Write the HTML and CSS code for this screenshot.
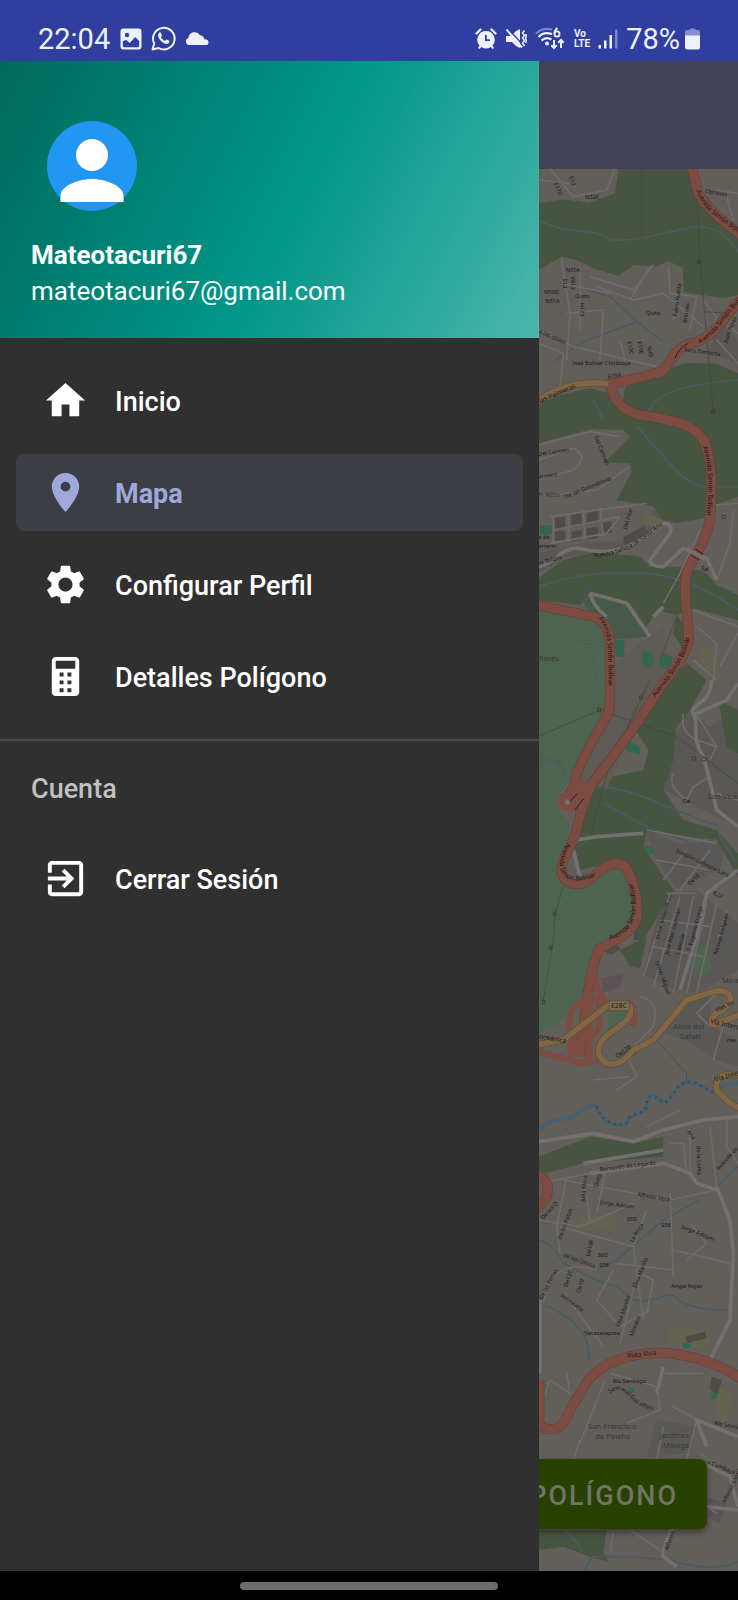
FILE: index.html
```html
<!DOCTYPE html>
<html lang="es">
<head>
<meta charset="utf-8">
<meta name="viewport" content="width=device-width, initial-scale=1">
<title>Mapa</title>
<link rel="stylesheet" href="styles.css">
</head>
<body>
<header class="status">
  <div class="status-group status-left">
    <span class="status-text">22:04</span>
    <svg class="ico-photo" viewBox="0 0 22 22" aria-hidden="true"><path fill-rule="evenodd" d="M3.500.5h15a3 3 0 0 1 3 3v15a3 3 0 0 1-3 3h-15a3 3 0 0 1-3-3v-15a3 3 0 0 1 3-3zM2.800 13v4.500c0 1 .6 1.700 1.700 1.700h13c1 0 1.700-.7 1.700-1.700V13l-4-4-5.500 6-3.200-3zM7 4.800a2.200 2.200 0 1 0 0 4.400 2.200 2.200 0 0 0 0-4.400z"/></svg>
    <svg class="ico-chat" viewBox="0 0 25 25" aria-hidden="true"><path d="M1.500 23.500l1.700-6A10.800 10.800 0 1 1 7.500 22z" fill="none" stroke="currentColor" stroke-width="2" stroke-linejoin="round"/><path d="M8.200 6.700c.4-.5 1.200-.5 1.500 0l1.300 2.600c.2.500-.8 1.500-1 1.900.8 1.600 2.300 3 4 3.700.5-.2 1.300-1.600 1.800-1.400l2.500 1.300c.6.400-.2 2.200-1 2.700-2 1.200-5.200-.5-7-2.200-1.800-1.700-3.600-4.300-3.200-6.500.1-.8.600-1.600 1.100-2.100z"/></svg>
    <svg class="ico-cloud" viewBox="0 0 24 15" aria-hidden="true"><path d="M4 14a3.600 3.600 0 0 1-.5-7A6.200 6.200 0 0 1 15 4.200c2.500 0 4 1.800 4.300 4 2.500-.2 4.200 1 4.200 3.200 0 1.600-1 2.600-2.500 2.600z"/></svg>
  </div>
  <div class="status-group status-right">
    <svg class="ico-alarm" viewBox="0 0 22 22" aria-hidden="true"><path fill-rule="evenodd" d="M11 3a8.700 8.700 0 0 1 6.500 14.500l1.500 2.500-1.500 1-1.800-2a8.700 8.700 0 0 1-9.400 0l-1.800 2L3 20l1.500-2.500A8.700 8.700 0 0 1 11 3zm-1 4v6h5v-1.800h-3.200V7z"/><path d="M1.500 5.500L5.500 1.500M16.500 1.500l4 4" stroke="currentColor" stroke-width="2.400" stroke-linecap="round"/></svg>
    <svg class="ico-mute" viewBox="0 0 22 22" aria-hidden="true"><path d="M1 8h5l5-5 4-2v19l-4-2-4-4H1z"/><path d="M1.500 1.500L17 19.500" stroke="currentColor" stroke-width="2"/><path d="M3.500 1L17 16" stroke="#303f9f" stroke-width="1.200"/><path d="M19.500 2.500l-2 2.500 2 2.500-2 2.500 2 2.500-2 2.500 2 3M20.500 6l1 2-1 2.500 1 2.500-1 2" fill="none" stroke="currentColor" stroke-width="1.500"/></svg>
    <svg class="ico-wifi" viewBox="0 0 31 24" aria-hidden="true"><path d="M1 6.500A17 17 0 0 1 17 2.500" fill="none" stroke="currentColor" stroke-width="2.200" opacity=".4"/><path d="M3.500 10A12.500 12.500 0 0 1 17 7.300M6.500 13.500a8.500 8.500 0 0 1 10-1" fill="none" stroke="currentColor" stroke-width="2.200"/><circle cx="12" cy="16.500" r="2"/><path d="M22.500 1q-3 2-3 5.500" fill="none" stroke="currentColor" stroke-width="2"/><circle cx="22" cy="7" r="2.600" fill="none" stroke="currentColor" stroke-width="1.800"/><path d="M19 13v8m-2.700-2.700L19 21l2.700-2.700M26 21v-8m-2.700 2.700L26 13l2.700 2.700" fill="none" stroke="currentColor" stroke-width="2"/></svg>
    <span class="volte"><span>Vo</span><span>LTE</span></span>
    <svg class="ico-signal" viewBox="0 0 20 20" aria-hidden="true"><path d="M.5 16h2.500v3.500H.5zM6 11.500h2.500v8H6zM11.500 6H14v13.500h-2.500z"/><path d="M17 .5h2.500v19H17z" opacity=".4"/></svg>
    <span class="status-text">78%</span>
    <svg class="ico-battery" viewBox="0 0 15 22" aria-hidden="true"><path d="M4.500 2q0-1.500 1.500-1.500h3q1.500 0 1.500 1.500H13q2 0 2 2v4H0V4q0-2 2-2z" opacity=".45"/><path d="M0 7.500h15V19q0 2.500-2.500 2.500h-10Q0 21.500 0 19z"/></svg>
  </div>
</header>

<main class="stage">
  <div class="screen">
    <div class="toolbar"></div>
    <div class="map-area">
      <svg class="map" viewBox="-1590 27 2214 4206" preserveAspectRatio="xMaxYMin slice" role="img" aria-label="Mapa">
        <defs>
          <path id="l1" d="M498 92C520 150 560 175 640 226"/>
          <path id="l2" d="M508 550C560 530 580 470 640 418"/>
          <path id="l3" d="M518 860C545 940 532 1020 530 1090"/>
          <path id="l4" d="M205 1375C240 1410 235 1480 235 1600"/>
          <path id="l5" d="M376 1612C420 1550 480 1490 480 1410"/>
          <path id="l6" d="M112 2048C60 2130 100 2190 200 2148"/>
          <path id="l7" d="M238 2340C310 2320 335 2260 305 2160"/>
          <path id="l8" d="M190 1190C290 1190 350 1130 420 1080"/>
          <path id="l9" d="M240 3700C290 3660 290 3740 370 3750"/>
          <path id="trunk-line" d="M485 20L505 100Q540 160 640 230M640 415C590 450 570 520 500 545C430 560 430 600 395 635C340 650 280 665 240 672C250 720 280 755 330 765C420 780 500 790 525 850C550 920 545 1000 540 1080C520 1180 470 1200 465 1270C465 1350 480 1400 475 1450C460 1500 420 1540 400 1570L300 1720 180 1880C140 1950 160 1990 110 2080C70 2160 120 2180 160 2170C210 2140 240 2090 285 2120C320 2170 330 2260 315 2290C290 2330 250 2340 210 2365C190 2400 175 2480 165 2560L150 2690M20 1335L190 1370Q238 1390 240 1450V1640C230 1690 150 1780 130 1880L105 1930M20 3790Q90 3840 120 3750L175 3660Q240 3580 400 3578Q540 3590 640 3660M28 3660V3800M20 3045C65 3060 65 3110 20 3145"/>
          <path id="secondary-line" d="M20 725Q120 655 235 672M20 2655L100 2640 235 2535 300 2540C320 2600 200 2610 205 2680C230 2730 270 2720 310 2670L370 2640 470 2520 560 2492C620 2490 610 2540 560 2560Q535 2580 550 2595L640 2560M640 2745Q550 2730 560 2790L600 2830 640 2850"/>
        </defs>
        <rect class="land" x="-1590" y="27" width="2214" height="4206"/>

        <!-- Built-up areas -->
        <g class="urban">
          <path d="M25 1180L150 1150 300 1140 370 1045 400 1080 300 1170 110 1190 25 1240z"/>
          <path d="M470 1650L540 1700 624 1640V2000L400 1890 430 1750z"/>
          <path d="M345 2005L440 2050 590 2045 570 2130 440 2185 380 2100z"/>
          <path d="M400 2200L500 2190 624 2290V2430L500 2500 430 2490 340 2440z"/>
          <path d="M450 2530L540 2510 540 2600 624 2640V2720L560 2700 470 2640 400 2620z"/>
          <path d="M380 3780L500 3800 480 3880 350 3890z"/>
          <path d="M560 480L624 540V610L540 580z"/>
        </g>
        <!-- Woodland -->
        <g class="wood">
          <path d="M265 27H485L505 100 560 165 624 215V405L580 415 460 395V325L415 303 380 320 310 315 265 348 190 325 140 300 95 290 25 330V130L100 118 175 128 255 100z"/>
          <path d="M25 735L90 705 180 685 235 700 300 780 330 810 180 808 25 850z"/>
          <path d="M285 680L340 660 420 625 470 608 560 612 624 640V1010L555 1035 520 1075 440 1090 400 1080 370 1040 260 1020 305 935 300 910 220 910 300 830 270 800z"/>
          <path d="M25 1255L100 1200 200 1175 330 1190 360 1220 470 1220 530 1240 560 1275 624 1305V1380L490 1345 440 1365 380 1350 350 1400 300 1330 180 1295 150 1335 25 1320z"/>
          <path d="M440 1365L465 1400 460 1470 430 1420z"/>
          <path d="M425 1550L470 1510 530 1560 480 1650 440 1700 430 1800 400 1890 460 1980 560 2010 624 2080V2150L560 2040 350 2015 340 2060 400 2150 440 2200 400 2240 340 2340 310 2340 330 2200 280 2100 150 2130 130 2050 200 1860 340 1830 355 1770 310 1700z"/>
          <path d="M270 2370L350 2330 330 2425 300 2420z"/>
          <path d="M25 2990L180 2930 310 2950 400 2930V2990L160 3010 25 3045z"/>
          <path d="M25 4110H230L220 4180 235 4205 180 4190 100 4160 25 4170z"/>
          <path d="M565 1620L624 1650V1780L590 1760z"/>
        </g>
        <path class="scrub" d="M155 1320L180 1300 300 1335 350 1400 350 1430 240 1440 200 1380z"/>
        <!-- Park -->
        <path class="park" d="M25 1350L200 1385 228 1450V1640L130 1830 80 1930 120 2000 80 2130 150 2180 250 2105 300 2140 330 2260 260 2340 190 2370 160 2500 110 2560 90 2590 25 2620z"/>
        <path class="park" d="M235 2540L300 2545 290 2600 235 2620zM480 2370L530 2350 545 2430 520 2450 480 2410z"/>
        <path class="lot" d="M230 1890L150 1860 240 1640 260 1500 400 1400 420 1520 355 1600z"/>
        <path class="meadow" d="M350 1060L400 1080 380 1100 330 1090zM510 1450L560 1480 570 1550 510 1510zM150 3170L270 3165 250 3210 130 3210zM420 3500L550 3515 530 3570 415 3550zM560 3680L610 3700 590 3780 560 3770z"/>
        <path class="mauve" d="M215 2455L280 2440 270 2480 220 2500zM530 4010L590 4030 570 4090 530 4070z"/>
        <g class="pitch"><path d="M255 1440h28v50h-28zM337 1475h32v46h-32zM400 1480l32 12-18 38-28-14zM30 1095h35v30H30zM290 1740l38 20 2 25-42-12zM345 2055l28 10v20l-28-8zM545 3695l20-5-4 25-16 5zM458 3545l25 8-5 12h-20zM296 3683h15v14h-15z"/></g>
        <g class="houses"><path d="M75 1075l30-6v36l-30 4zM125 1065l30-5v36l-30 6zM170 1058l35-8v36l-35 6zM75 1115l30-3v28l-30 3zM125 1115l30-5v30l-30 5zM170 1105l35-4v32l-35 5zM215 1090l30-8v36l-30 6zM280 1130l60-30 20 20-80 45zM275 2680l45-20v20l-40 30zM225 2375l30-20 18 10-28 20zM545 3650l30 10-10 40-25-10zM465 3530l60-15 5 20-60 15z"/></g>

        <!-- Streams -->
        <g class="stream">
          <path d="M25 180C120 230 200 200 240 240C330 245 380 220 500 200Q580 200 624 275M160 385L240 410 320 485 400 545M320 485L160 545 70 605M355 755C380 690 500 670 624 660M190 720L220 780"/>
          <path d="M320 800C400 880 440 960 520 980H624M25 1280Q180 1230 300 1240 450 1230 624 1350M25 1800L80 1800 105 1835M200 1880C300 1880 400 1940 540 1990Q560 1980 570 2030L620 2110M220 1930L350 2000 500 2055 560 2035"/>
          <path d="M25 3240Q70 3250 100 3310L200 3360 260 3380 310 3420C380 3430 400 3400 430 3405Q460 3450 600 3450M200 3330L260 3300 400 3180 510 3120M45 3435Q190 3500 175 3600M550 3090L624 3020"/>
          <path d="M160 4233L190 4190 300 4190 420 4200Q550 4240 624 4205M100 4110Q150 4150 155 4175"/>
        </g>
        <path class="river" d="M30 2910C60 2870 110 2880 130 2870C150 2850 190 2830 200 2840C220 2900 280 2900 290 2890C300 2850 340 2870 350 2840C350 2800 370 2800 400 2830C440 2810 430 2770 480 2765C530 2770 540 2820 560 2780L624 2770"/>
        <path class="river-dash" d="M200 2840C220 2900 280 2900 290 2890C300 2850 340 2870 350 2840C350 2800 370 2800 400 2830C440 2810 430 2770 480 2765C530 2770 540 2820 560 2780"/>

        <!-- Streets -->
        <g class="street">
          <path d="M60 27L130 110 230 90 255 27M25 60L120 70M95 300L120 460 110 600M180 350L310 390 370 315M200 380L310 420 400 400 520 500M300 420L360 320M415 320L420 400 500 410 480 510M520 420L560 470 540 530M95 370L240 400M110 460L220 450 210 600M25 510L130 560 380 620M270 540L290 620M440 400L430 480M150 320L150 510M25 550L100 580 90 690M560 90L624 100M590 110L610 180M560 540L624 610M580 490L624 520"/>
          <path d="M25 855L180 815 270 830M25 900L130 865Q180 890 130 930L25 960M25 1010L200 990 300 920M60 1070L350 1030M70 1110L270 1070M70 1070V1150M115 1060V1140M160 1050L165 1135M210 1040L220 1130M60 1150L230 1120 270 1070"/>
          <path d="M555 1035L624 1030M610 1050L600 1150 560 1260M510 1110L450 1240 400 1330M490 1350L624 1400M500 1400L560 1450 550 1560M624 1420L570 1520M490 1500L560 1560"/>
          <path d="M460 1660Q450 1720 500 1740L560 1760 540 1800M430 1840Q410 1880 470 1920L490 1880 540 1850M490 1650L560 1760M560 1900L624 1920M350 2010L560 2050M470 2070L400 2160M540 2070L450 2190M380 2100L540 2130M420 2200L340 2450M450 2210L370 2480M490 2210L430 2500M530 2230L470 2500M560 2230L500 2500M590 2250L560 2350M410 2200L500 2200M390 2280L540 2300M370 2360L520 2390"/>
          <path d="M330 2510Q390 2520 370 2600L310 2660M560 2500L500 2560 540 2600M590 2560L550 2700M190 2760L300 2750M290 2680L320 2750 260 2790M350 2900L450 2850M480 2910V3030M540 2900L560 3080M420 2950L460 2950 470 3040M590 2880V2960L624 3010M25 3070L180 3040M110 3050L80 3200 90 3280M160 3050L180 3180M230 3020L200 3160"/>
          <path d="M100 3060L420 3120 560 3090M25 3180L150 3200 310 3130M90 3200L310 3260 350 3150M40 3430Q60 3290 200 3330M420 3100L430 3350M260 3310L430 3330M310 3260L340 3480M480 3190L530 3250 470 3300M250 3330L200 3420 270 3500 360 3450M100 3400L220 3560M320 3350L270 3550M430 3270L600 3310M60 3660L120 3700 110 3640M60 3660L40 3720M225 3660L150 3850M240 3640L380 3680 390 3750 290 3790M400 3640L520 3640M430 3740L540 3800M330 3340L370 3360 350 3460"/>
          <path d="M150 3840L130 3900 230 3900M400 3800L380 3900M500 3780L470 3900M510 3880L560 3920M250 4120L240 4180M300 4110L390 4170M500 4020L560 4060"/>
        </g>
        <g class="street wide">
          <path d="M25 1220C80 1210 90 1160 150 1165C240 1190 300 1170 400 1090Q430 1090 420 1120L360 1200Q360 1220 400 1220L460 1165 530 1195 560 1260"/>
          <path d="M180 1300Q190 1340 230 1370M180 1300L290 1330 360 1430M370 1370L400 1340"/>
          <path d="M545 1560C540 1640 480 1630 490 1660C510 1700 480 1730 520 1790Q540 1860 560 1950 L624 2000M624 1570L590 1620 500 1660"/>
          <path d="M624 2130L530 2200 500 2330 450 2490M140 2040L200 2030 340 2020M130 2070L150 2150"/>
          <path d="M25 2945L190 2920 310 2945 400 2910 520 2880 624 2870M160 3010L400 2970M180 3040L400 3010 480 3040 500 3070 560 3090M560 3080L600 3180 610 3280 600 3480 540 3600"/>
          <path d="M30 3420V3640M380 3700L400 3620M530 3860L500 3780 624 3830M500 3900L600 3950 624 4040M430 4100Q390 4180 400 4190L440 4220M530 4040L624 4050"/>
        </g>
        <g class="path">
          <path d="M275 30L260 110 320 170M25 180C100 170 200 160 250 200S360 190 500 160M40 320Q110 240 190 310M70 1240Q150 1190 270 1230L380 1270M25 1460Q70 1470 90 1450L180 1440 200 1560M125 1370Q130 1420 100 1450M120 1560Q140 1500 180 1440M40 1640L60 1590 110 1570M180 1570L220 1610V1660"/>
        </g>
        <g class="power">
          <path d="M335 27V250M500 90L510 300 550 760M525 455L590 460M0 1740L210 1650 440 1730 624 1870M360 1560L240 1810 180 2030M390 1500L440 1370M100 2180L75 2260 70 2340 40 2520M380 2640L470 2740V2765"/>
          <path class="pylon" d="M504 302h8v8h-8zM545 750h10v10h-10zM576 1066h10v10h-10zM329 1608h9v9h-9zM203 1645h9v9h-9zM486 1790h10v10h-10zM517 1792h10v10h-10zM70 2256h9v9h-9zM57 2358h9v9h-9zM36 2522h9v9h-9z"/>
        </g>

        <!-- Main roads -->
        <use class="casing" href="#trunk-line"/>
        <use class="trunk" href="#trunk-line"/>
        <path class="junction" d="M140 1860L200 1870 165 1960 125 1955Q85 1950 82 1925T115 1895z"/>
        <g class="ramp">
          <path d="M190 2410Q195 2500 234 2530L300 2530Q325 2560 308 2600M165 2522Q215 2500 205 2550L140 2610Q115 2640 125 2690M165 2520Q112 2545 118 2600L150 2690M180 2565Q218 2570 205 2605T160 2615M180 2420L178 2700"/>
          <path d="M20 2672L150 2710 205 2700"/>
        </g>
        <circle class="hole" cx="112" cy="1926" r="8"/>
        <path class="hatch" d="M120 1925l22-24M135 1950l26-34"/>
        <use class="secondary-case" href="#secondary-line"/>
        <use class="secondary" href="#secondary-line"/>
        <path class="bridge-deck" d="M470 1166L526 1198"/>
        <path class="bridge" d="M497 1168l22 14M484 1186l22 14M435 595Q445 565 475 550"/>
        <path class="shield" d="M238 2522h60v30h-60z"/>

        <!-- Labels -->
        <g class="label road">
          <text><textPath href="#l1">Avenida Simón Bolívar</textPath></text>
          <text><textPath href="#l2">Avenida Simón Bolívar</textPath></text>
          <text><textPath href="#l3">Avenida Simón Bolívar</textPath></text>
          <text><textPath href="#l4">Avenida Simón Bolívar</textPath></text>
          <text><textPath href="#l5">Avenida Simón Bolívar</textPath></text>
          <text><textPath href="#l6">Avenida Simón Bolívar</textPath></text>
          <text><textPath href="#l7">Avenida Simón Bolívar</textPath></text>
          <text x="292" y="3594" transform="rotate(-6 292 3594)">Ruta Viva</text>
          <text x="244" y="2544">E28C</text>
          <text x="26" y="2635" transform="rotate(10 26 2635)">oceánica</text>
          <text x="30" y="730" transform="rotate(-24 30 730)">las Palmeras</text>
          <text x="540" y="2590" transform="rotate(12 540 2590)">Vía Interoc</text>
          <text x="556" y="2765" transform="rotate(-16 556 2765)">Vía Intero</text>
        </g>
        <g class="label">
          <text><textPath href="#l8">Nuestra Señora de Santa Ana</textPath></text>
          <text><textPath href="#l9">Semeral Guy Alfaro</textPath></text>
          <text x="165" y="118">N32F</text>
          <text x="72" y="70" transform="rotate(70 72 70)">E17D</text>
          <text x="118" y="50" transform="rotate(75 118 50)">E13</text>
          <text x="524" y="98" transform="rotate(10 524 98)">Cipreses</text>
          <text x="108" y="336">N50A</text>
          <text x="135" y="413">Quito</text>
          <text x="42" y="402">N50D</text>
          <text x="46" y="428">N51A</text>
          <text x="347" y="466">Quito</text>
          <text x="110" y="385" transform="rotate(-90 110 385)">E18</text>
          <text x="136" y="389" transform="rotate(-90 136 389)">E18A</text>
          <text x="162" y="470" transform="rotate(-90 162 470)">S21N</text>
          <text x="440" y="470" transform="rotate(-82 440 470)">Pablo Rueda</text>
          <text x="470" y="490" transform="rotate(-82 470 490)">Briones</text>
          <text x="25" y="518" transform="rotate(24 25 518)">a los olivos</text>
          <text x="128" y="615">José Bolívar Chiriboga</text>
          <text x="292" y="545" transform="rotate(80 292 545)">E19C</text>
          <text x="322" y="545" transform="rotate(80 322 545)">E19E</text>
          <text x="352" y="560" transform="rotate(80 352 560)">N49</text>
          <text x="235" y="656" transform="rotate(-10 235 656)">E19A</text>
          <text x="462" y="573" transform="rotate(8 462 573)">Sara Zambrza</text>
          <text x="590" y="550" transform="rotate(-68 590 550)">Juan Pérez</text>
          <text x="25" y="888" transform="rotate(-8 25 888)">Del Carmen</text>
          <text x="192" y="830" transform="rotate(68 192 830)">Del Carmen</text>
          <text x="25" y="956" transform="rotate(-8 25 956)">armers</text>
          <text x="106" y="1016" transform="rotate(-22 106 1016)">De las Golondrinas</text>
          <text x="25" y="1136">e de</text>
          <text x="25" y="1164">errerín</text>
          <text x="25" y="1216" transform="rotate(-16 25 1216)">os Toldos</text>
          <text x="290" y="1110" transform="rotate(-74 290 1110)">Del Pilar</text>
          <text x="512" y="1230" transform="rotate(12 512 1230)">Sal</text>
          <text x="458" y="1928">Oe</text>
          <text x="438" y="2076" transform="rotate(26 438 2076)">Joaquín Gallegos Lara</text>
          <text x="480" y="2178" transform="rotate(-45 480 2178)">Oe10</text>
          <text x="548" y="2202" transform="rotate(30 548 2202)">E27</text>
          <text x="386" y="2340" transform="rotate(-75 386 2340)">Víctor Mideros</text>
          <text x="415" y="2385" transform="rotate(-75 415 2385)">Jose Abel Guzmán</text>
          <text x="448" y="2385" transform="rotate(-75 448 2385)">Cabezas</text>
          <text x="482" y="2375" transform="rotate(-75 482 2375)">T. Eugenio Espejo</text>
          <text x="562" y="2385" transform="rotate(-75 562 2385)">Nicolás Delgado</text>
          <text x="375" y="2405" transform="rotate(70 375 2405)">Oliver Miguel</text>
          <text x="560" y="2556" transform="rotate(-26 560 2556)">Vías Ru</text>
          <text x="262" y="2695" transform="rotate(-38 262 2695)">Oe12B</text>
          <text x="590" y="2645">nes</text>
          <text x="210" y="3034" transform="rotate(-7 210 3034)">Bernardo de Legarda</text>
          <text x="470" y="2915" transform="rotate(55 470 2915)">Ana</text>
          <text x="500" y="2958" transform="rotate(88 500 2958)">de la Loma</text>
          <text x="566" y="3032" transform="rotate(-48 566 3032)">Avenida de</text>
          <text x="165" y="3125" transform="rotate(-86 165 3125)">Julia Mera</text>
          <text x="200" y="3085" transform="rotate(-70 200 3085)">Quito</text>
          <text x="322" y="3108" transform="rotate(10 322 3108)">Alfredo Vera</text>
          <text x="210" y="3132" transform="rotate(8 210 3132)">Jorge Adoum</text>
          <text x="454" y="3205" transform="rotate(22 454 3205)">Jorge Adoum</text>
          <text x="290" y="3184">S5D</text>
          <text x="394" y="3202">S5E</text>
          <text x="308" y="3248" transform="rotate(-58 308 3248)">La Rioja</text>
          <text x="94" y="3240" transform="rotate(-70 94 3240)">De los Patos</text>
          <text x="40" y="3180" transform="rotate(-48 40 3180)">De los O</text>
          <text x="98" y="3290" transform="rotate(20 98 3290)">de los Olivos</text>
          <text x="180" y="3290" transform="rotate(-78 180 3290)">De10E</text>
          <text x="204" y="3292">S6D</text>
          <text x="208" y="3320">S5E</text>
          <text x="112" y="3382" transform="rotate(-72 112 3382)">De12C</text>
          <text x="150" y="3400" transform="rotate(-72 150 3400)">Oe10</text>
          <text x="36" y="3420" transform="rotate(-62 36 3420)">De las Perlas</text>
          <text x="90" y="3408" transform="rotate(36 90 3408)">Venezuela</text>
          <text x="318" y="3385" transform="rotate(-68 318 3385)">Elisa Mariño</text>
          <text x="268" y="3502" transform="rotate(-70 268 3502)">Elisa Mariño</text>
          <text x="308" y="3530" transform="rotate(-68 308 3530)">Monaco</text>
          <text x="424" y="3384">Ángel Rojas</text>
          <text x="162" y="3524">Yanazarapata</text>
          <text x="248" y="3670">Río Santiago</text>
          <text x="552" y="3794" transform="rotate(10 552 3794)">Río Santiago</text>
          <text x="530" y="3910" transform="rotate(22 530 3910)">a Cumbayá</text>
          <text x="586" y="4030" transform="rotate(-64 586 4030)">Alfonso Lamiña</text>
          <text x="414" y="4172" transform="rotate(-72 414 4172)">Alfonso</text>
        </g>
        <g class="label place">
          <text x="26" y="1504">flores</text>
          <text x="25" y="1012">n Alto</text>
          <text x="532" y="1918">San Vicente</text>
          <text x="576" y="2468">Miravalle</text>
          <text x="430" y="2606">Altos del</text>
          <text x="450" y="2636">Safari</text>
          <text x="174" y="3808">San Francisco</text>
          <text x="196" y="3838">de Pinsho</text>
          <text x="390" y="3834">Jardines</text>
          <text x="398" y="3864">Málaga</text>
        </g>
      </svg>
      <button class="fab" type="button">POLÍGONO</button>
    </div>
  </div>

  <aside class="drawer">
    <div class="profile">
      <svg class="avatar" viewBox="0 0 90 90" role="img" aria-label="Foto de perfil"><circle cx="45" cy="45" r="45" fill="#2196f3"/><circle cx="45" cy="34" r="16" fill="#fff"/><path d="M13.500 81V75C13.500 64 33 58 45 58s31.500 6 31.500 17v6z" fill="#fff"/></svg>
      <strong class="name">Mateotacuri67</strong>
      <span class="email">mateotacuri67@gmail.com</span>
    </div>
    <nav class="menu">
      <a class="item" href="#inicio"><svg viewBox="0 0 24 24" aria-hidden="true"><path d="M10 20v-6h4v6h5v-8h3L12 3 2 12h3v8z"/></svg><span>Inicio</span></a>
      <a class="item active" href="#mapa" aria-current="page"><svg viewBox="0 0 24 24" aria-hidden="true"><path d="M12 2C8.130 2 5 5.130 5 9c0 5.250 7 13 7 13s7-7.750 7-13c0-3.870-3.130-7-7-7zm0 9.500a2.500 2.500 0 0 1 0-5 2.500 2.500 0 0 1 0 5z"/></svg><span>Mapa</span></a>
      <a class="item" href="#perfil"><svg viewBox="0 0 24 24" aria-hidden="true"><path d="M19.140 12.940c.04-.3.060-.61.060-.94 0-.32-.02-.64-.07-.94l2.030-1.580c.18-.14.230-.41.120-.61l-1.920-3.320c-.12-.22-.37-.29-.59-.22l-2.390.96c-.5-.38-1.030-.7-1.620-.94l-.36-2.540c-.04-.24-.24-.41-.48-.41h-3.840c-.24 0-.43.170-.47.410l-.36 2.540c-.59.240-1.130.570-1.620.940l-2.390-.96c-.22-.08-.47 0-.59.220L2.740 8.870c-.12.210-.08.470.12.610l2.030 1.580c-.05.300-.09.630-.09.940s.02.640.07.940l-2.030 1.580c-.18.140-.23.410-.12.610l1.920 3.320c.12.220.37.290.59.220l2.390-.96c.5.380 1.030.7 1.620.940l.36 2.540c.05.240.24.410.48.410h3.840c.24 0 .44-.17.470-.41l.36-2.540c.59-.24 1.130-.56 1.620-.94l2.390.96c.22.080.47 0 .59-.22l1.920-3.320c.12-.22.070-.47-.12-.61l-2.010-1.580zM12 15.600c-1.980 0-3.600-1.620-3.600-3.600s1.620-3.600 3.600-3.600 3.600 1.620 3.600 3.600-1.620 3.600-3.600 3.600z"/></svg><span>Configurar Perfil</span></a>
      <a class="item" href="#detalles"><svg viewBox="0 0 24 24" aria-hidden="true"><path d="M17 2H7c-1.100 0-2 .9-2 2v16c0 1.100.9 2 2 2h10c1.100 0 2-.9 2-2V4c0-1.100-.9-2-2-2zM11 20H9v-2h2v2zm0-4H9v-2h2v2zm0-4H9v-2h2v2zm4 8h-2v-2h2v2zm0-4h-2v-2h2v2zm0-4h-2v-2h2v2zm2-4H7V4h10v4z"/></svg><span>Detalles Polígono</span></a>
    </nav>
    <h2 class="section">Cuenta</h2>
    <nav class="menu account" aria-label="Cuenta">
      <a class="item" href="#salir"><svg viewBox="0 0 24 24" aria-hidden="true"><path d="M10.090 15.590L11.500 17l5-5-5-5-1.410 1.410L12.670 11H3v2h9.670l-2.580 2.590zM19 3H5c-1.110 0-2 .9-2 2v4h2V5h14v14H5v-4H3v4c0 1.100.89 2 2 2h14c1.100 0 2-.9 2-2V5c0-1.100-.9-2-2-2z"/></svg><span>Cerrar Sesión</span></a>
    </nav>
  </aside>
</main>

<footer class="gesture"><span class="pill"></span></footer>
</body>
</html>
```
FILE: styles.css
```css
* {
  box-sizing: border-box;
}

body {
  margin: 0;
  min-height: 100vh;
  display: flex;
  flex-direction: column;
  background: #000;
  color: #fff;
  font-family: Roboto, "Liberation Sans", sans-serif;
  font-size: 27px;
}

svg {
  display: block;
  fill: currentColor;
}

/* Status bar */
.status {
  display: flex;
  justify-content: space-between;
  align-items: center;
  height: 61px;
  padding: 16px 38px 0;
  background: #303f9f;
  color: #eef0fb;
}

.status-group {
  display: flex;
  align-items: center;
}

.status-left {
  gap: 9px;
}

.status-right {
  gap: 8px;
}

.status-text {
  font-size: 29px;
  line-height: 32px;
}

.ico-photo,
.ico-alarm,
.ico-mute {
  width: 22px;
  height: 22px;
}

.ico-photo {
  margin-left: 1px;
}

.ico-chat {
  width: 25px;
  height: 25px;
}

.ico-cloud {
  width: 24px;
  height: 15px;
}

.ico-wifi {
  width: 31px;
  height: 24px;
}

.ico-signal {
  width: 20px;
  height: 20px;
}

.ico-battery {
  width: 15px;
  height: 22px;
  margin-left: -3px;
}

.volte {
  display: flex;
  flex-direction: column;
  font-size: 10px;
  font-weight: 700;
  line-height: 10px;
}

/* Screen under the drawer */
.stage {
  flex: 1;
  display: grid;
  grid-template-columns: 73fr 27fr;
}

.screen {
  grid-area: 1 / 1 / 2 / 3;
  display: flex;
  flex-direction: column;
}

.toolbar {
  height: 108px;
  background: #424158;
}

.map-area {
  flex: 1;
  display: grid;
  align-items: end;
  justify-items: end;
  overflow: hidden;
  background: #625e59;
}

.map {
  grid-area: 1 / 1;
  width: 100%;
  height: 100%;
  min-height: 0;
}

.fab {
  grid-area: 1 / 1;
  z-index: 1;
  width: 420px;
  max-width: 80%;
  height: 70px;
  margin: 0 31px 42px;
  padding: 3px 29px 0;
  border: 0;
  border-radius: 8px;
  background: #294100;
  box-shadow: 0 3px 6px rgba(0, 0, 0, 0.4);
  color: #6f7566;
  font: 500 27px/32px Roboto, "Liberation Sans", sans-serif;
  letter-spacing: 2px;
  text-align: right;
}

/* Map drawing */
.land { fill: #625e59; }
.urban { fill: #5a5857; }
.wood { fill: #465440; }
.scrub { fill: #465a4b; }
.park { fill: #4d6451; }
.lot { fill: #5e5a55; }
.meadow { fill: #636350; }
.mauve { fill: #5c5359; }
.pitch { fill: #35664f; }
.houses { fill: #514b48; }
.hole { fill: #77706c; }

.stream,
.street,
.path,
.power,
.river,
.river-dash,
.trunk,
.casing,
.ramp,
.secondary,
.secondary-case,
.hatch,
.bridge,
.bridge-deck {
  fill: none;
  stroke-linejoin: round;
}

.stream { stroke: #4a5b63; stroke-width: 5; }
.river { stroke: #49606c; stroke-width: 12; }
.river-dash { stroke: #3c4850; stroke-width: 7; stroke-dasharray: 5 14; }
.street { stroke: #6e6b6a; stroke-width: 5; }
.wide { stroke: #74706f; stroke-width: 11; }
.path { stroke: #5e4f36; stroke-width: 3; stroke-dasharray: 4 9; }
.power { stroke: #40463f; stroke-width: 2; }
.pylon { stroke: #333; }
.casing { stroke: #683c34; stroke-width: 30; }
.trunk { stroke: #7c4b42; stroke-width: 27; }
.junction { fill: #7c4b42; }
.ramp { stroke: #7c4b42; stroke-width: 19; }
.secondary-case { stroke: #5d4a30; stroke-width: 20; }
.secondary { stroke: #806645; stroke-width: 17; }
.hatch { stroke: #222; stroke-width: 3; }
.bridge { stroke: #222; stroke-width: 3; }
.bridge-deck { stroke: #74706f; stroke-width: 11; }
.shield { fill: #7b6d52; stroke: #5d4a30; stroke-width: 2; }

.label {
  fill: #1b1a19;
  font-family: "Noto Sans", sans-serif;
  font-size: 17px;
}

.road {
  font-size: 20px;
}

.place {
  fill: #393836;
  font-size: 23px;
}

/* Drawer */
.drawer {
  grid-area: 1 / 1 / 2 / 2;
  z-index: 2;
  background: #303030;
}

.profile {
  display: flex;
  flex-direction: column;
  padding: 60px 31px 29px;
  background: linear-gradient(117deg, #00695c, #009688 53%, #4db6ac);
  font-size: 26px;
  line-height: 36px;
}

.avatar {
  width: 90px;
  height: 90px;
  margin: 0 0 26px 16px;
}

.name {
  font-weight: 700;
}

.menu {
  display: flex;
  flex-direction: column;
  gap: 15px;
  padding: 24px 16px;
}

.item {
  display: flex;
  align-items: center;
  gap: 26px;
  height: 77px;
  padding: 0 26px;
  border-radius: 8px;
  color: #fff;
  font-weight: 500;
  text-decoration: none;
}

.item svg {
  width: 47px;
  height: 47px;
}

.item span {
  padding-top: 3px;
}

.active {
  background: #3d3e44;
  color: #9fa8da;
  font-weight: 700;
}

.section {
  margin: 0;
  padding: 32px 31px 0;
  border-top: 2px solid #4a4a4a;
  color: #c1c1c1;
  font-size: 27px;
  font-weight: 500;
  line-height: 32px;
}

.account {
  padding-top: 35px;
}

/* Gesture bar */
.gesture {
  display: flex;
  justify-content: center;
  align-items: center;
  height: 29px;
  background: #000;
}

.pill {
  width: 35%;
  height: 8px;
  border-radius: 4px;
  background: #6c6c6c;
}
```
